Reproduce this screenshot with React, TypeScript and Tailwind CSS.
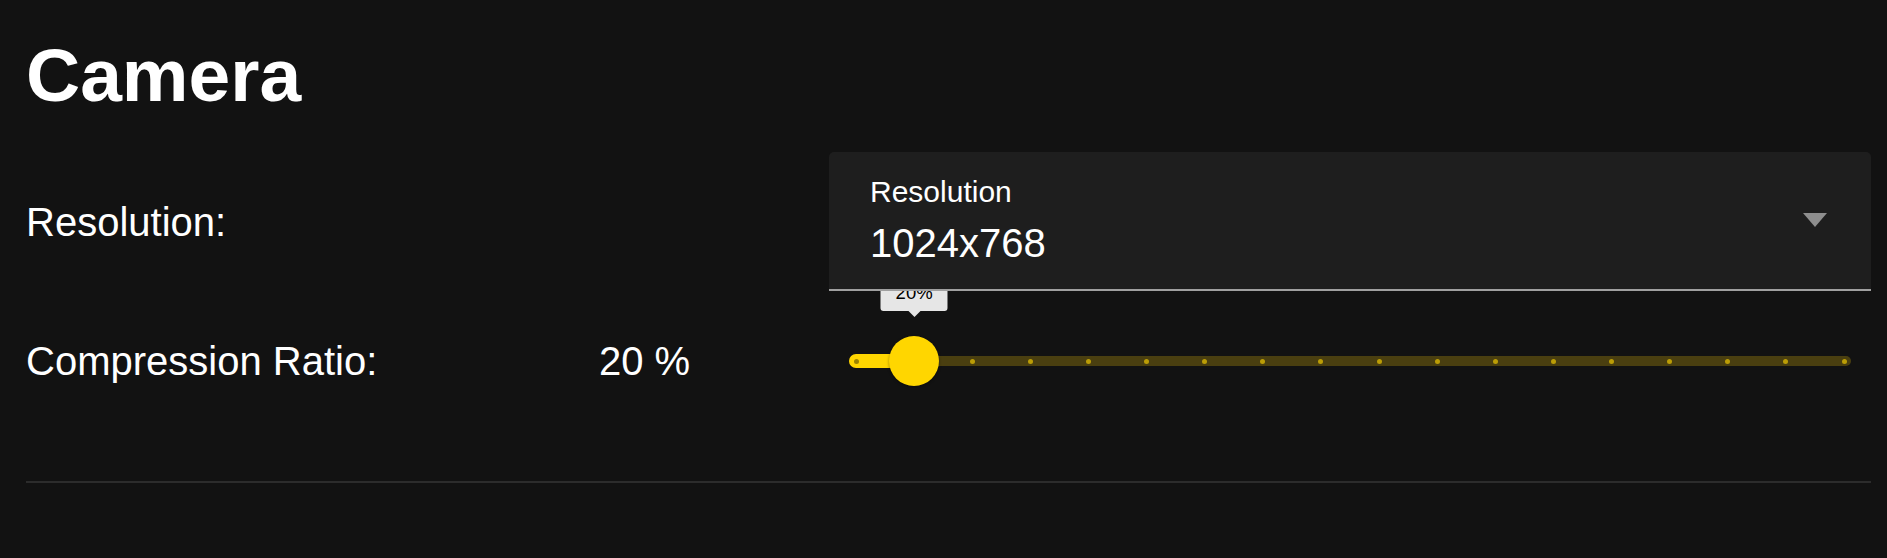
import React from "react";

const MARKS = Array.from({ length: 18 }, (_, i) => i);

function Slider() {
  const inner = 988;
  const thumbX = 7 + inner / 17;
  return (
    <div className="relative mx-[20px] h-[50px]">
      {/* rail */}
      <div className="absolute left-0 right-0 top-[20px] h-[10px] rounded-full bg-[#4a3f10]" />
      {/* active track */}
      <div
        className="absolute left-0 top-[18px] h-[14px] rounded-l-full bg-[#ffd600]"
        style={{ width: thumbX }}
      />
      {/* marks */}
      {MARKS.map((i) => {
        const x = 7 + (inner * i) / 17;
        return (
          <div
            key={i}
            className={
              "absolute top-[22.5px] h-[5px] w-[5px] rounded-full " +
              (i <= 1 ? "bg-[#9c8300]" : "bg-[#bb9d06]")
            }
            style={{ left: x - 2.5 }}
          />
        );
      })}
      {/* value label */}
      <div
        className="absolute top-[-59px] flex -translate-x-1/2 flex-col items-center"
        style={{ left: thumbX }}
      >
        <div className="rounded-[3px] bg-[#e6e6e6] px-[15px] pt-[5px] pb-[7px] text-[18.5px] leading-[22px] text-black">
          20%
        </div>
        <div className="h-0 w-0 border-x-[6px] border-t-[6px] border-x-transparent border-t-[#e6e6e6]" />
      </div>
      {/* thumb */}
      <div
        className="absolute top-0 h-[50px] w-[50px] rounded-full bg-[#ffd600] shadow-[0_1px_3px_rgba(0,0,0,0.4)]"
        style={{ left: thumbX - 25 }}
      />
    </div>
  );
}

export default function App() {
  return (
    <div
      className="min-h-screen bg-[#121212] pl-[26px] pr-[16px] pt-[38px] text-white"
      style={{ fontFamily: '"Liberation Sans", Arial, sans-serif' }}
    >
      <h1 className="text-[75px] font-bold leading-[75px]">Camera</h1>

      <div className="relative z-10 mt-[39px] flex items-center">
        <div className="w-[573px] text-[40px] leading-[46px]">Resolution:</div>
        <div className="w-[230px]" />
        <div className="flex flex-1 items-center rounded-t-[5px] border-b-2 border-[#a0a0a0] bg-[#1e1e1e] pl-[41px] pr-[44px]">
          <div className="flex-1 pt-[25px] pb-[26px]">
            <div className="text-[30px] leading-[30px]">Resolution</div>
            <div className="mt-[16px] text-[40px] leading-[40px]">1024x768</div>
          </div>
          <div className="mt-[-2px] h-0 w-0 border-x-[12px] border-t-[14px] border-x-transparent border-t-[#8e8e8e]" />
        </div>
      </div>

      <div className="relative z-0 mt-[45px] flex h-[50px] items-center">
        <div className="w-[573px] text-[40px] leading-[46px]">Compression Ratio:</div>
        <div className="w-[230px] text-[40px] leading-[46px]">20 %</div>
        <div className="flex-1">
          <Slider />
        </div>
      </div>

      <div className="mt-[95px] h-[2px] bg-[#2c2c2c]" />
    </div>
  );
}
